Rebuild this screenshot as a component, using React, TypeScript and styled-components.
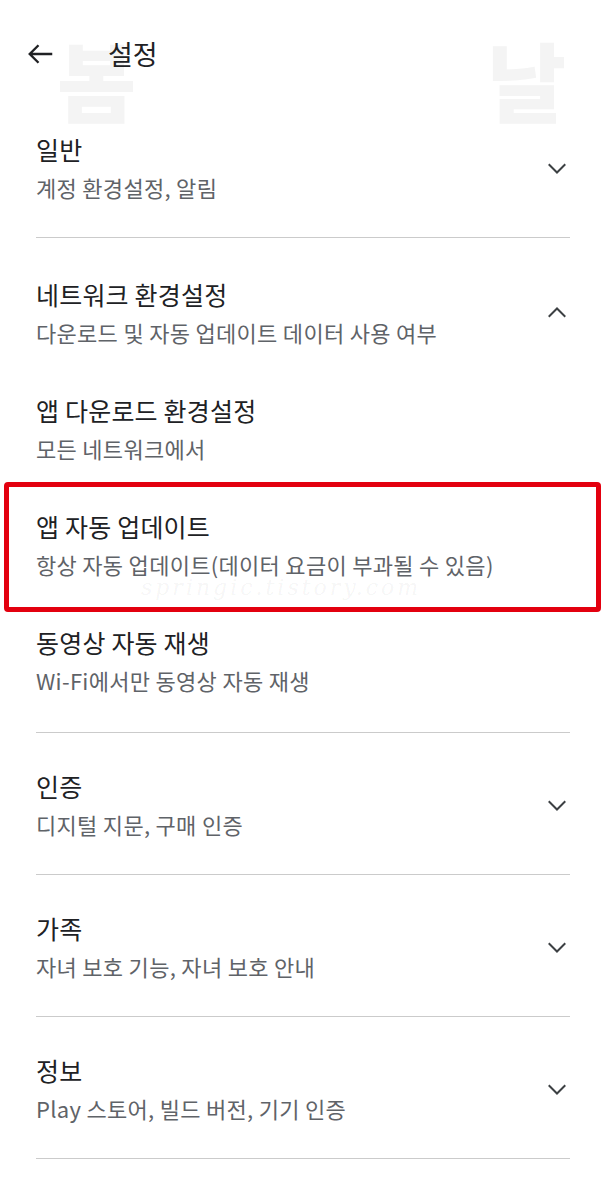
import styled, { createGlobalStyle } from 'styled-components';

const GlobalStyle = createGlobalStyle`
  html, body {
    margin: 0;
    padding: 0;
    background: #fff;
  }
  body {
    font-family: 'Noto Sans CJK KR', 'Noto Sans', sans-serif;
    color: #202124;
  }
`;

const Page = styled.div`
  position: relative;
  width: 606px;
  min-height: 1187px;
  overflow: hidden;
  background: #fff;
`;

// faint blog watermark letters behind the header
const Watermark = styled.div<{ $left: number; $top: number }>`
  position: absolute;
  left: ${(p) => p.$left}px;
  top: ${(p) => p.$top}px;
  font-size: 86px;
  font-weight: 900;
  line-height: 1;
  color: #f4f4f4;
  pointer-events: none;
  user-select: none;
`;

const Header = styled.div`
  position: relative;
  display: flex;
  align-items: center;
  height: 98px;
  padding: 10px 0 0 26px;
  box-sizing: border-box;
`;

const BackButton = styled.button`
  display: flex;
  align-items: center;
  justify-content: center;
  width: 30px;
  height: 30px;
  padding: 0;
  border: none;
  background: none;
  color: #202124;
`;

const Title = styled.h1`
  margin: 0 0 0 52px;
  font-size: 27px;
  font-weight: 400;
  line-height: 32px;
`;

const List = styled.div`
  position: relative;
  padding: 0 36px;
`;

const Section = styled.div<{ $open?: boolean }>`
  padding: ${(p) => (p.$open ? '40px 0 37px' : '37px 0 35px')};
  border-bottom: 1px solid #cbcbcb;

  &:first-child {
    padding-top: 35px;
  }
`;

const Row = styled.div`
  display: flex;
  align-items: center;
  justify-content: space-between;
`;

const Texts = styled.div`
  display: flex;
  flex-direction: column;
  gap: 7px;
`;

const ItemTitle = styled.div`
  font-size: 25px;
  line-height: 32px;
  letter-spacing: 0.2px;
  color: #202124;
`;

const ItemSub = styled.div`
  font-size: 22px;
  line-height: 30px;
  letter-spacing: 0.3px;
  color: #5f6368;
`;

const Chevron = styled.svg`
  width: 22px;
  height: 22px;
  margin-right: 2px;
  color: #3c4043;
`;

const SubItem = styled.div<{ $highlight?: boolean }>`
  position: relative;
  padding-top: 47px;

  ${(p) =>
    p.$highlight &&
    `
    &::before {
      content: '';
      position: absolute;
      top: 19px;
      bottom: -33px;
      left: -32px;
      right: -31px;
      border: 5px solid #e3000f;
      border-radius: 4px;
      pointer-events: none;
    }
  `}
`;

const Stamp = styled.div`
  position: absolute;
  left: 105px;
  top: 112px;
  font-family: 'DejaVu Serif', serif;
  font-style: italic;
  font-size: 22px;
  letter-spacing: 3px;
  color: rgba(0, 0, 0, 0.05);
  pointer-events: none;
`;

type Item = { title: string; sub: string };

const ChevronIcon = ({ up }: { up?: boolean }) => (
  <Chevron viewBox="0 0 24 24" fill="none" stroke="currentColor" strokeWidth={2.2}>
    <path d={up ? 'M3 16l9-9 9 9' : 'M3 8l9 9 9-9'} />
  </Chevron>
);

const Entry = ({ title, sub }: Item) => (
  <Texts>
    <ItemTitle>{title}</ItemTitle>
    <ItemSub>{sub}</ItemSub>
  </Texts>
);

const collapsed: Item[] = [
  { title: '인증', sub: '디지털 지문, 구매 인증' },
  { title: '가족', sub: '자녀 보호 기능, 자녀 보호 안내' },
  { title: '정보', sub: 'Play 스토어, 빌드 버전, 기기 인증' },
];

const networkItems: Item[] = [
  { title: '앱 다운로드 환경설정', sub: '모든 네트워크에서' },
  { title: '앱 자동 업데이트', sub: '항상 자동 업데이트(데이터 요금이 부과될 수 있음)' },
  { title: '동영상 자동 재생', sub: 'Wi-Fi에서만 동영상 자동 재생' },
];

export default function App() {
  return (
    <Page>
      <GlobalStyle />
      <Watermark $left={57} $top={36} aria-hidden>봄</Watermark>
      <Watermark $left={487} $top={36} aria-hidden>날</Watermark>
      <Header>
        <BackButton aria-label="뒤로">
          <svg width="30" height="30" viewBox="0 0 24 24" fill="none" stroke="currentColor" strokeWidth={1.9}>
            <path d="M21 12H3M10 5l-7 7 7 7" />
          </svg>
        </BackButton>
        <Title>설정</Title>
      </Header>
      <List>
        <Section>
          <Row>
            <Entry title="일반" sub="계정 환경설정, 알림" />
            <ChevronIcon />
          </Row>
        </Section>
        <Section $open>
          <Row>
            <Entry title="네트워크 환경설정" sub="다운로드 및 자동 업데이트 데이터 사용 여부" />
            <ChevronIcon up />
          </Row>
          {networkItems.map((it) => {
            const hl = it.title === '앱 자동 업데이트';
            return (
              <SubItem key={it.title} $highlight={hl}>
                <Entry title={it.title} sub={it.sub} />
                {hl && <Stamp>springic.tistory.com</Stamp>}
              </SubItem>
            );
          })}
        </Section>
        {collapsed.map((it) => (
          <Section key={it.title}>
            <Row>
              <Entry title={it.title} sub={it.sub} />
              <ChevronIcon />
            </Row>
          </Section>
        ))}
      </List>
    </Page>
  );
}
